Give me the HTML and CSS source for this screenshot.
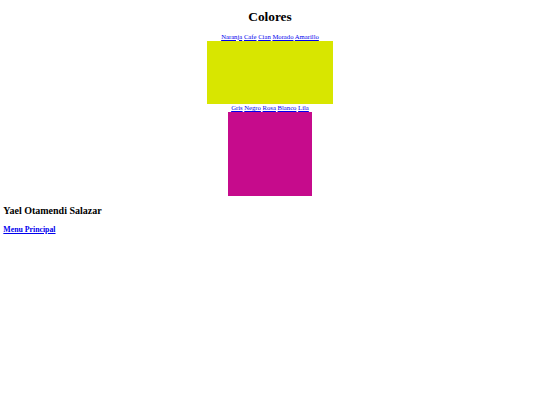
FILE: index.html
```html
<!DOCTYPE html>
<html lang="es">
<head>
<meta charset="utf-8">
<title>Colores</title>
<link rel="stylesheet" href="styles.css">
</head>
<body>
<h1 class="title">Colores</h1>
<div class="group">
  <nav class="links">
    <a href="#">Naranja</a> <a href="#">Cafe</a> <a href="#">Cian</a> <a href="#">Morado</a> <a href="#">Amarillo</a>
  </nav>
  <div class="swatch swatch-yellow"></div>
</div>
<div class="group">
  <nav class="links">
    <a href="#">Gris</a> <a href="#">Negro</a> <a href="#">Rosa</a> <a href="#">Blanco</a> <a href="#">Lila</a>
  </nav>
  <div class="swatch swatch-magenta"></div>
</div>
<h2 class="author">Yael Otamendi Salazar</h2>
<h3 class="menu"><a href="#">Menu Principal</a></h3>
</body>
</html>
```
FILE: styles.css
```css
html {
  background: #ffffff;
}
body {
  margin: 0 3.33px 3.33px;
  font-family: "Liberation Serif", "Times New Roman", serif;
  font-size: 6.67px;
  color: #000000;
}
a {
  color: #0000ee;
  text-decoration: underline;
}
.title {
  font-size: 13.33px;
  font-weight: bold;
  text-align: center;
  margin: 9.4px 0 7.5px;
}
.group {
  display: flex;
  flex-direction: column;
  align-items: center;
}
.links {
  line-height: 8.2px;
  height: 8.2px;
  text-align: center;
}
.swatch-yellow {
  width: 126px;
  height: 63px;
  background: #d8e600;
}
.swatch-magenta {
  width: 84px;
  height: 84px;
  background: #c60b8c;
}
.author {
  font-size: 10px;
  font-weight: bold;
  margin: 8.6px 0 9.3px;
}
.menu {
  font-size: 7.8px;
  font-weight: bold;
  margin: 7.8px 0;
}
```
